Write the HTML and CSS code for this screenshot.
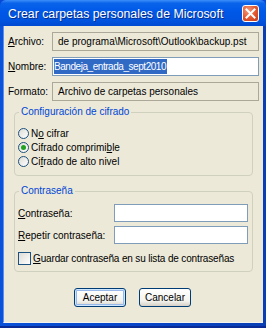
FILE: index.html
```html
<!DOCTYPE html>
<html>
<head>
<meta charset="utf-8">
<link rel="stylesheet" href="styles.css">
</head>
<body>
<div class="window">
  <div class="titlebar">
    <span class="title">Crear carpetas personales de Microsoft</span>
    <span class="close"><svg width="11" height="11" viewBox="0 0 11 11"><path d="M1.5 1.5 L9.5 9.5 M9.5 1.5 L1.5 9.5" stroke="#fff" stroke-width="2" stroke-linecap="square"/></svg></span>
  </div>
  <div class="frame">
    <div class="content">
      <div class="row">
        <span class="lbl"><u>A</u>rchivo:</span>
        <span class="field static">de programa\Microsoft\Outlook\backup.pst</span>
      </div>
      <div class="row">
        <span class="lbl"><u>N</u>ombre:</span>
        <span class="field input"><span class="sel">Bandeja_entrada_sept2010</span></span>
      </div>
      <div class="row">
        <span class="lbl">Formato:</span>
        <span class="field static">Archivo de carpetas personales</span>
      </div>

      <div class="group g1">
        <span class="legend">Configuración de cifrado</span>
        <div class="opt"><span class="radio"></span><span>N<u>o</u> cifrar</span></div>
        <div class="opt"><span class="radio on"></span><span>Cifrado comprimi<u>b</u>le</span></div>
        <div class="opt"><span class="radio"></span><span>Ci<u>f</u>rado de alto nivel</span></div>
      </div>

      <div class="group g2">
        <span class="legend">Contraseña</span>
        <div class="prow"><span><u>C</u>ontraseña:</span><span class="pin"></span></div>
        <div class="prow"><span><u>R</u>epetir contraseña:</span><span class="pin"></span></div>
        <div class="opt chk"><span class="check"></span><span><u>G</u>uardar contraseña en su lista de contraseñas</span></div>
      </div>

      <div class="buttons">
        <span class="btn def">Aceptar</span>
        <span class="btn">Cancelar</span>
      </div>
    </div>
  </div>
</div>
</body>
</html>
```

FILE: styles.css
```css
html, body {
  margin: 0;
  padding: 0;
  background: #fff;
}
body {
  width: 266px;
  height: 328px;
  overflow: hidden;
  font-family: "Liberation Sans", Arial, sans-serif;
  font-size: 10px;
  color: #000;
}
.window {
  width: 266px;
  height: 328px;
  display: flex;
  flex-direction: column;
  background: #0848d8;
}
.titlebar {
  height: 26px;
  flex: none;
  display: flex;
  align-items: center;
  justify-content: space-between;
  padding: 1px 7px 0 8px;
  box-sizing: border-box;
  background: linear-gradient(#3d8ff9 0%, #0a64ea 12%, #0058e8 45%, #0053df 80%, #004ad0 100%);
  border-radius: 6px 6px 0 0;
}
.title {
  color: #fff;
  font-family: "Liberation Sans", Arial, sans-serif;
  font-size: 12.3px;
  white-space: nowrap;
  text-shadow: 1px 1px 0 #0b2e8a;
}
.close {
  width: 17px;
  height: 17px;
  flex: none;
  box-sizing: border-box;
  border: 1px solid #fff;
  border-radius: 3px;
  background: radial-gradient(circle at 35% 30%, #f19a7c 0%, #e2542c 55%, #c23c18 100%);
  display: flex;
  align-items: center;
  justify-content: center;
}
.frame {
  flex: 1;
  display: flex;
  padding: 0 3px 3px 3px;
  background: linear-gradient(90deg, #0a52d8, #0845c8 50%, #0a3fb4);
  border-bottom: 2px solid #0a2a96;
}
.content {
  flex: 1;
  background: #ece9d8;
  border-left: 1px solid #5b8ef0;
  border-bottom: 1px solid #f4f3ee;
  padding: 6px 4px 0 4px;
  display: flex;
  flex-direction: column;
}
.row {
  display: flex;
  align-items: center;
  height: 19px;
  margin-bottom: 6px;
}
.lbl {
  width: 44px;
  flex: none;
  white-space: nowrap;
}
.field {
  flex: 1;
  height: 19px;
  box-sizing: border-box;
  display: flex;
  align-items: center;
  padding-left: 5px;
  white-space: nowrap;
  overflow: hidden;
}
.static {
  border: 1px solid #aca899;
  background: #ece9d8;
}
.input {
  border: 1px solid #7f9db9;
  background: #fff;
  padding-left: 1px;
}
.sel {
  background: #316ac5;
  color: #fff;
  padding: 2px 1px 2px 0;
  letter-spacing: -0.45px;
}
.group {
  position: relative;
  margin: 0 6px 0 6px;
  border: 1px solid #d0d0bf;
  border-radius: 4px;
  display: flex;
  flex-direction: column;
}
.legend {
  position: absolute;
  top: -7px;
  left: 4px;
  padding: 0 2px;
  background: #ece9d8;
  color: #0046d5;
  white-space: nowrap;
}
.g1 {
  margin-top: 5px;
  padding: 13px 4px 7px 3px;
}
.g1 .opt {
  height: 14px;
}
.g2 {
  margin-top: 15px;
  padding: 12px 4px 6px 3px;
}
.opt {
  display: flex;
  align-items: center;
  height: 13px;
  white-space: nowrap;
}
.radio {
  width: 11px;
  height: 11px;
  flex: none;
  box-sizing: border-box;
  border: 1px solid #1c5180;
  border-radius: 50%;
  background: linear-gradient(135deg, #dcdbd5, #fff);
  margin-right: 2px;
  display: flex;
  align-items: center;
  justify-content: center;
}
.radio.on::after {
  content: "";
  width: 5px;
  height: 5px;
  border-radius: 50%;
  background: #21a121;
}
.prow {
  display: flex;
  align-items: center;
  justify-content: space-between;
  height: 18px;
  margin-bottom: 4px;
  white-space: nowrap;
}
.pin {
  width: 134px;
  height: 18px;
  box-sizing: border-box;
  border: 1px solid #7f9db9;
  background: #fff;
}
.chk {
  margin-top: 3px;
  height: 14px;
  letter-spacing: -0.15px;
}
.check {
  width: 13px;
  height: 13px;
  flex: none;
  box-sizing: border-box;
  border: 1px solid #1c5180;
  background: linear-gradient(135deg, #dcdbd5, #fff);
  margin-right: 2px;
}
.buttons {
  display: flex;
  justify-content: center;
  gap: 13px;
  margin-top: 16px;
  padding-right: 2px;
}
.btn {
  width: 52px;
  height: 19px;
  box-sizing: border-box;
  border: 1px solid #003c74;
  border-radius: 3px;
  background: linear-gradient(#fff, #f3f3ef 70%, #d6d0c5);
  display: flex;
  align-items: center;
  justify-content: center;
}
.btn.def {
  box-shadow: inset 0 0 0 1px #cee7ff, inset 0 0 0 2px #98b8ea;
}
```
